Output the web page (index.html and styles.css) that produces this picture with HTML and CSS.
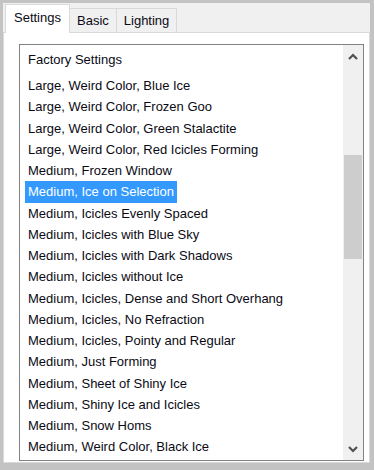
FILE: index.html
```html
<!DOCTYPE html>
<html lang="en">
<head>
  <meta charset="UTF-8">
  <title>Ice Presets</title>
  <link rel="stylesheet" href="styles.css">
</head>
<body>

<div class="frame">
  <div class="tabs">
    <div class="tab active">Settings</div>
    <div class="tab">Basic</div>
    <div class="tab">Lighting</div>
  </div>

  <div class="panel">
    <div class="list">
      <div class="items">
        <div class="header">Factory Settings</div>
        <div class="item">Large, Weird Color, Blue Ice</div>
        <div class="item">Large, Weird Color, Frozen Goo</div>
        <div class="item">Large, Weird Color, Green Stalactite</div>
        <div class="item">Large, Weird Color, Red Icicles Forming</div>
        <div class="item">Medium, Frozen Window</div>
        <div class="item selected">Medium, Ice on Selection</div>
        <div class="item">Medium, Icicles Evenly Spaced</div>
        <div class="item">Medium, Icicles with Blue Sky</div>
        <div class="item">Medium, Icicles with Dark Shadows</div>
        <div class="item">Medium, Icicles without Ice</div>
        <div class="item">Medium, Icicles, Dense and Short Overhang</div>
        <div class="item">Medium, Icicles, No Refraction</div>
        <div class="item">Medium, Icicles, Pointy and Regular</div>
        <div class="item">Medium, Just Forming</div>
        <div class="item">Medium, Sheet of Shiny Ice</div>
        <div class="item">Medium, Shiny Ice and Icicles</div>
        <div class="item">Medium, Snow Homs</div>
        <div class="item">Medium, Weird Color, Black Ice</div>
      </div>

      <div class="scrollbar">
        <div class="arrow">
          <svg width="10" height="7" viewBox="0 0 10 7"><path d="M1 6 L5 2 L9 6" fill="none" stroke="#505050" stroke-width="2.2"/></svg>
        </div>
        <div class="track">
          <div class="thumb"></div>
        </div>
        <div class="arrow">
          <svg width="10" height="7" viewBox="0 0 10 7"><path d="M1 1 L5 5 L9 1" fill="none" stroke="#505050" stroke-width="2.2"/></svg>
        </div>
      </div>
    </div>
  </div>
</div>

</body>
</html>
```

FILE: styles.css
```css
body {
  margin: 0;
  padding: 0;
  background-color: #c3c3c3;
  font-family: 'Liberation Sans', Arial, sans-serif;
  font-size: 13px;
  color: #0a0a14;
}

.frame {
  width: 374px;
  height: 470px;
  box-sizing: border-box;
  padding: 3px 4px 7px 3px;
  display: flex;
  flex-direction: column;
}

.tabs {
  display: flex;
  align-items: flex-end;
  height: 29px;
  background-color: #f0f0f0;
  padding-left: 2px;
}

.tab {
  height: 23px;
  line-height: 24px;
  padding: 0 7px;
  border: 1px solid #d9d9d9;
  border-bottom: none;
  margin-left: -1px;
  background-color: #f0f0f0;
}

.tab.active {
  height: 28px;
  line-height: 26px;
  padding: 0 8px;
  margin-left: 0;
  margin-bottom: -1px;
  background-color: #ffffff;
  position: relative;
  z-index: 1;
}

.panel {
  flex: 1;
  display: flex;
  background-color: #ffffff;
  border: 1px solid #d9d9d9;
  padding: 11px 5px 1px 15px;
}

.list {
  flex: 1;
  display: flex;
  border: 1px solid #828282;
  overflow: hidden;
}

.items {
  flex: 1;
  overflow: hidden;
}

.header {
  height: 30px;
  line-height: 30px;
  padding-left: 8px;
}

.item {
  height: 21.25px;
  line-height: 21px;
  width: fit-content;
  margin-left: 5px;
  padding: 0 3px;
  white-space: nowrap;
}

.selected {
  background-color: #3399ff;
  color: #ffffff;
}

.scrollbar {
  width: 20px;
  display: flex;
  flex-direction: column;
  background-color: #f0f0f0;
}

.arrow {
  height: 22px;
  display: flex;
  align-items: center;
  justify-content: center;
}

.track {
  flex: 1;
  padding-top: 88px;
}

.thumb {
  height: 104px;
  margin: 0 1px;
  background-color: #cdcdcd;
}
```
